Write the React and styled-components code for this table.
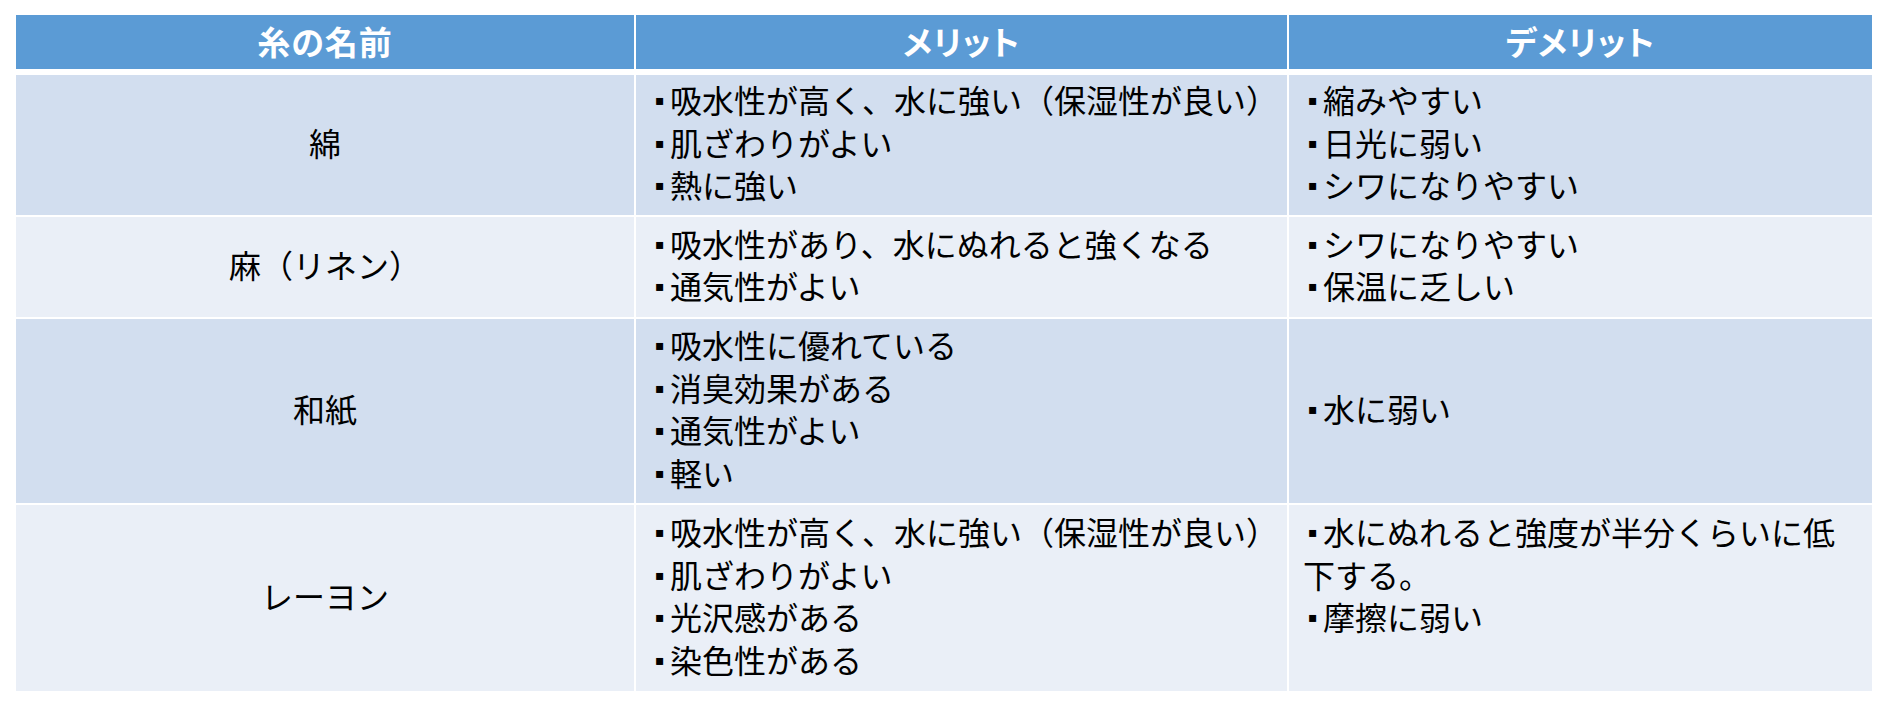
import React from "react";
import styled, { createGlobalStyle } from "styled-components";

const GlobalStyle = createGlobalStyle`
  html, body {
    margin: 0;
    padding: 0;
    background: #ffffff;
  }
  body {
    font-family: "Noto Sans CJK JP", "Noto Sans", sans-serif;
  }
`;

const rows = [
  {
    name: "綿",
    height: 140,
    merit: ["吸水性が高く、水に強い（保湿性が良い）", "肌ざわりがよい", "熱に強い"],
    demerit: ["縮みやすい", "日光に弱い", "シワになりやすい"],
  },
  {
    name: "麻（リネン）",
    height: 100,
    merit: ["吸水性があり、水にぬれると強くなる", "通気性がよい"],
    demerit: ["シワになりやすい", "保温に乏しい"],
  },
  {
    name: "和紙",
    height: 184,
    merit: ["吸水性に優れている", "消臭効果がある", "通気性がよい", "軽い"],
    demerit: ["水に弱い"],
  },
  {
    name: "レーヨン",
    height: 186,
    merit: ["吸水性が高く、水に強い（保湿性が良い）", "肌ざわりがよい", "光沢感がある", "染色性がある"],
    demerit: ["水にぬれると強度が半分くらいに低下する。", "摩擦に弱い", ""],
  },
];

const Page = styled.div`
  padding: 15px 0 0 16px;
`;

const Table = styled.div`
  display: flex;
  flex-direction: column;
  gap: 2px;
  width: 1856px;
`;

const Row = styled.div`
  display: grid;
  grid-template-columns: 618px 651px 583px;
  column-gap: 2px;
  min-height: ${(p) => p.$height}px;
  margin-bottom: ${(p) => (p.$head ? 4 : 0)}px;
`;

const HeadCell = styled.div`
  background: #5b9bd5;
  color: #ffffff;
  font-size: 33px;
  font-weight: 700;
  font-feature-settings: "palt";
  letter-spacing: 1px;
  padding-bottom: 2px;
  display: flex;
  align-items: center;
  justify-content: center;
`;

const NameCell = styled.div`
  background: ${(p) => (p.$odd ? "#d2deef" : "#eaeff7")};
  color: #000000;
  font-size: 32px;
  padding-bottom: 6px;
  display: flex;
  align-items: center;
  justify-content: center;
`;

const ListCell = styled.div`
  background: ${(p) => (p.$odd ? "#d2deef" : "#eaeff7")};
  color: #000000;
  font-size: 32px;
  line-height: 42.5px;
  padding: 0 8px 6px 14px;
  display: flex;
  flex-direction: column;
  justify-content: center;
`;

const Line = styled.div`
  min-height: 42.5px;
`;

const Bullet = styled.span`
  display: inline-block;
  width: 20px;
  font-family: "DejaVu Sans", sans-serif;
  font-size: 14px;
  line-height: 1;
  vertical-align: 8px;
  padding-left: 5px;
  box-sizing: border-box;
`;

const List = ({ items, odd }) => (
  <ListCell $odd={odd}>
    {items.map((t, i) => (
      <Line key={i}>
        {t ? (
          <>
            <Bullet>▪</Bullet>
            {t}
          </>
        ) : (
          "\u00a0"
        )}
      </Line>
    ))}
  </ListCell>
);

export default function App() {
  return (
    <Page>
      <GlobalStyle />
      <Table>
        <Row $height={54} $head>
          <HeadCell>糸の名前</HeadCell>
          <HeadCell>メリット</HeadCell>
          <HeadCell>デメリット</HeadCell>
        </Row>
        {rows.map((r, i) => (
          <Row key={r.name} $height={r.height}>
            <NameCell $odd={i % 2 === 0}>{r.name}</NameCell>
            <List items={r.merit} odd={i % 2 === 0} />
            <List items={r.demerit} odd={i % 2 === 0} />
          </Row>
        ))}
      </Table>
    </Page>
  );
}
